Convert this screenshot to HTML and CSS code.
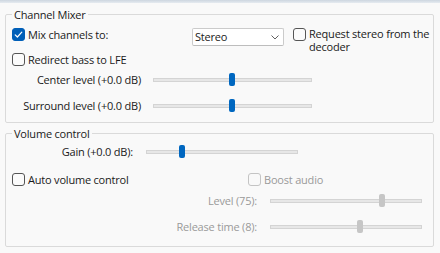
FILE: index.html
```html
<!DOCTYPE html>
<html>
<head>
<meta charset="utf-8">
<link rel="stylesheet" href="styles.css">
</head>
<body>
<div class="strip"></div>
<div class="page">
  <fieldset class="group group-mixer">
    <legend>Channel Mixer</legend>
    <div class="row-mix">
      <label class="check mix-check">
        <span class="box checked"><svg viewBox="0 0 13 13" width="13" height="13"><path d="M3.2 6.8 L5.4 9 L9.8 4.2" fill="none" stroke="#fff" stroke-width="1.2" stroke-linecap="round" stroke-linejoin="round"/></svg></span>
        <span class="text">Mix channels to:</span>
      </label>
      <div class="combo">
        <span class="combo-text">Stereo</span>
        <svg class="chev" viewBox="0 0 8 5" width="8" height="5"><path d="M0.5 0.5 L4 4 L7.5 0.5" fill="none" stroke="#606060" stroke-width="1"/></svg>
      </div>
      <label class="check check-top">
        <span class="box"></span>
        <span class="text text-wrap">Request stereo from the decoder</span>
      </label>
    </div>
    <div class="row-single">
      <label class="check">
        <span class="box"></span>
        <span class="text">Redirect bass to LFE</span>
      </label>
    </div>
    <div class="row-slider slider-mixer gap7">
      <span class="slabel">Center level (+0.0 dB)</span>
      <div class="slider w159"><span class="thumb" style="left:76px"></span></div>
    </div>
    <div class="row-slider slider-mixer gap13">
      <span class="slabel">Surround level (+0.0 dB)</span>
      <div class="slider w159"><span class="thumb" style="left:76px"></span></div>
    </div>
  </fieldset>

  <fieldset class="group group-volume">
    <legend>Volume control</legend>
    <div class="row-slider slider-gain">
      <span class="slabel">Gain (+0.0 dB):</span>
      <div class="slider w152"><span class="thumb" style="left:33px"></span></div>
    </div>
    <div class="row-auto">
      <label class="check auto-check">
        <span class="box"></span>
        <span class="text">Auto volume control</span>
      </label>
      <label class="check disabled">
        <span class="box"></span>
        <span class="text">Boost audio</span>
      </label>
    </div>
    <div class="row-slider slider-level disabled gap8">
      <span class="slabel">Level (75):</span>
      <div class="slider w152"><span class="thumb" style="left:109px"></span></div>
    </div>
    <div class="row-slider slider-level disabled gap13">
      <span class="slabel">Release time (8):</span>
      <div class="slider w152"><span class="thumb" style="left:87px"></span></div>
    </div>
  </fieldset>
</div>
</body>
</html>
```
FILE: styles.css
```css
html, body {
  margin: 0;
  padding: 0;
}
body {
  width: 440px;
  height: 253px;
  overflow: hidden;
  background: #f9f9f9;
  font-family: "Open Sans", "Noto Sans", sans-serif;
  font-size: 11px;
  letter-spacing: -0.2px;
  color: #1a1a1a;
}
.strip {
  height: 3px;
  background: linear-gradient(#cdd6e0, #e6ebf0);
}
.page {
  padding: 3px 6px 0 5px;
}
.group {
  margin: 0;
  padding: 0 6px 10px 6px;
  border: 1px solid #dadada;
  border-radius: 2px;
  min-width: 0;
}
.group legend {
  padding: 0 2px;
  margin: 0;
  line-height: 17px;
  height: 17px;
}
.group-volume {
  margin-top: 2px;
  padding-bottom: 13px;
}

/* checkbox */
.check {
  display: flex;
  align-items: center;
  gap: 3px;
  height: 13px;
  line-height: 13px;
  white-space: nowrap;
}
.box {
  box-sizing: border-box;
  width: 13px;
  height: 13px;
  flex: none;
  border: 1px solid #555;
  border-radius: 3px;
  background: #fbfbfb;
  display: block;
}
.box svg { display: block; margin: -1px; }
.box.checked {
  background: #005fb8;
  border-color: #005fb8;
}
.check.disabled .box {
  border-color: #c4c4c4;
  background: #f9f9f9;
}
.check.disabled .text,
.disabled .slabel {
  color: #9a9a9a;
}

/* row 1 */
.row-mix {
  margin-top: 5px;
  height: 18px;
  display: flex;
  align-items: flex-start;
}
.mix-check {
  width: 180px;
  flex: none;
}
.combo {
  box-sizing: border-box;
  flex: none;
  width: 92px;
  height: 18px;
  border: 1px solid #cbcbcb;
  border-bottom-color: #bdbdbd;
  border-radius: 2px;
  background: #fff;
  display: flex;
  align-items: center;
  justify-content: space-between;
  padding: 0 4px 0 2px;
}
.combo-text { line-height: 16px; }
.chev { display: block; margin-top: 1px; }
.check-top {
  margin-left: 9px;
  align-items: flex-start;
  height: 13px;
}
.text-wrap {
  white-space: normal;
  width: 128px;
  line-height: 13px;
  margin-top: -1px;
}

.row-single {
  margin-top: 7px;
}

/* slider rows */
.row-slider {
  display: grid;
  align-items: center;
  height: 13px;
}
.gap7 { margin-top: 7px; }
.gap8 { margin-top: 8px; }
.gap13 { margin-top: 13px; }
.slabel {
  text-align: right;
  white-space: nowrap;
  line-height: 13px;
}
.slider-mixer { grid-template-columns: 129px 159px; column-gap: 12px; }
.slider-gain { grid-template-columns: 121px 152px; column-gap: 13px; margin-top: 3px; }
.slider-level { grid-template-columns: 245px 152px; column-gap: 13px; }

.slider {
  position: relative;
  height: 13px;
}
.w159 { width: 159px; }
.w152 { width: 152px; }
.slider::before {
  content: "";
  position: absolute;
  left: 0;
  right: 0;
  top: 5px;
  height: 4px;
  box-sizing: border-box;
  background: #e7e7e7;
  border: 1px solid #d4d4d4;
}
.thumb {
  position: absolute;
  top: 0;
  width: 6px;
  height: 13px;
  border-radius: 2px;
  background: #0067c0;
}
.disabled .thumb {
  background: #c6c6c6;
}

.row-auto {
  margin-top: 15px;
  display: flex;
}
.auto-check {
  width: 236px;
  flex: none;
}
```
